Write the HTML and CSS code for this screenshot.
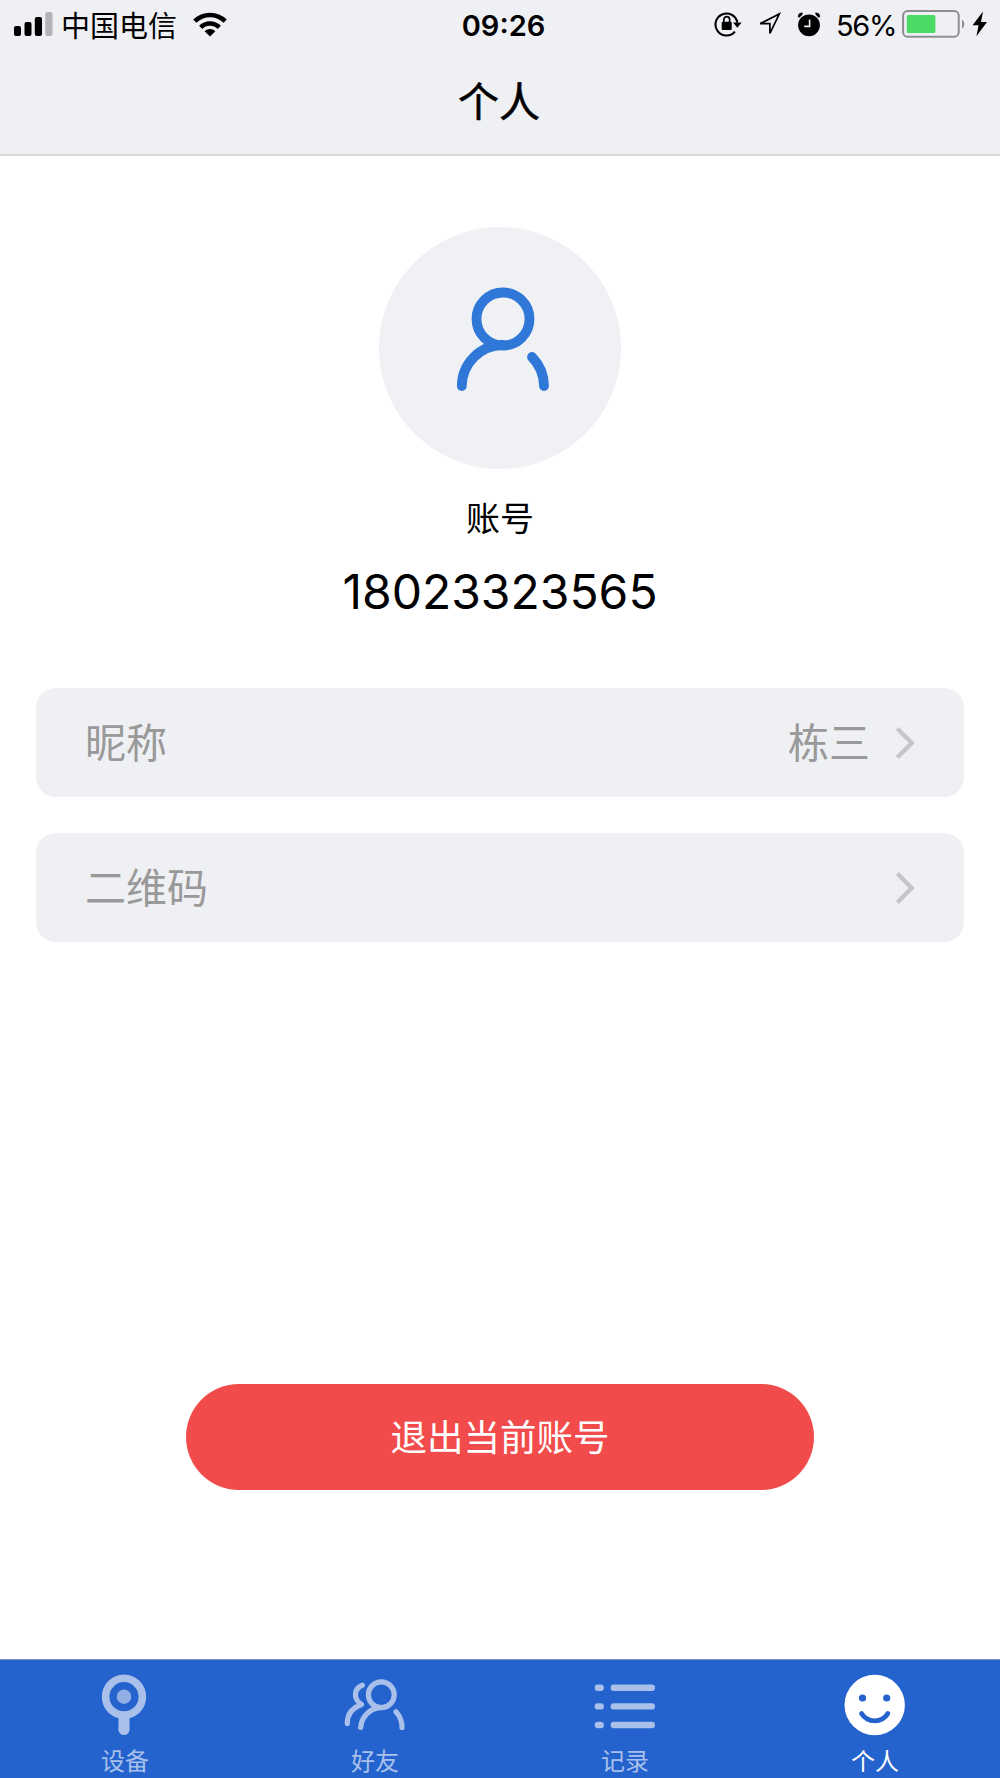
FILE: index.html
```
<!DOCTYPE html>
<html lang="zh-CN">
<head>
    <meta charset="UTF-8">
    <meta name="viewport" content="width=device-width, initial-scale=1.0">
    <title>个人</title>
    <link rel="stylesheet" href="styles.css">
</head>
<body>
    <div class="header">
        <div class="status">
            <div class="status-left">
                <svg class="signal" width="39" height="24" viewBox="0 0 39 24">
                    <rect x="0" y="14" width="7" height="10" rx="2"/>
                    <rect x="10.5" y="10" width="7" height="14" rx="2"/>
                    <rect x="20.8" y="5" width="7.2" height="19" rx="2"/>
                    <rect x="31.3" y="0" width="7.2" height="24" rx="2" fill="#b3b4b7"/>
                </svg>
                <span class="carrier">中国电信</span>
                <svg class="wifi" width="34" height="25" viewBox="0 0 34 25">
                    <g fill="none" stroke="#000" stroke-width="4.6">
                        <path d="M1.8 9.2a21.6 21.6 0 0 1 30.4 0"/>
                        <path d="M7.7 15.3a13.2 13.2 0 0 1 18.6 0"/>
                    </g>
                    <path d="M11.6 19.2a7.7 7.7 0 0 1 10.8 0L17 24.6z"/>
                </svg>
            </div>
            <div class="time">09:26</div>
            <div class="status-right">
                <svg class="rotate" width="28" height="26" viewBox="0 0 28 26">
                    <path d="M20.9 20.6A11 11 0 1 1 23.3 11.5" fill="none" stroke="#000" stroke-width="2.1"/>
                    <path d="M19 11.5h8.6l-4.3 5.3z"/>
                    <rect x="7.7" y="10.8" width="10" height="8.2" rx="1"/>
                    <path d="M9.8 11.5V8.6a2.9 2.9 0 0 1 5.8 0v2.9" fill="none" stroke="#000" stroke-width="1.7"/>
                </svg>
                <svg class="arrow" width="25" height="25" viewBox="0 0 25 25">
                    <path d="M3.2 11.6L22.3 2 12.9 21.3V11.6z" fill="none" stroke="#000" stroke-width="1.7"/>
                </svg>
                <svg class="alarm" width="24" height="25" viewBox="0 0 24 25">
                    <circle cx="12" cy="13.3" r="10.9"/>
                    <path d="M1.2 4.6A4 4 0 0 1 5.2.9L5 2.6 2.2 5.2zM22.8 4.6A4 4 0 0 0 18.800.9L19 2.600 21.800 5.200z" stroke="#000" stroke-width="1"/>
                    <path d="M12.600 7.400v7H7.200" fill="none" stroke="#eff0f4" stroke-width="1.600"/>
                </svg>
                <span class="percent">56%</span>
                <svg class="battery" width="64" height="28" viewBox="0 0 64 28">
                    <rect x="1.1" y="1.1" width="55.6" height="25.6" rx="4.5" fill="none" stroke="#8d8e91" stroke-width="2"/>
                    <rect x="4.8" y="5" width="28.6" height="18" rx="1.5" fill="#4cd964"/>
                    <path d="M60 9.5a5.5 5.5 0 0 1 0 9z" fill="#8d8e91"/>
                </svg>
                <svg class="bolt" width="16" height="26" viewBox="0 0 16 26">
                    <path d="M11 .5L.6 14.2h6L4.4 25.2 15 11H9z"/>
                </svg>
            </div>
        </div>
        <h1>个人</h1>
    </div>

    <div class="content">
        <div class="avatar">
            <svg width="94" height="106" viewBox="0 0 94 106">
                <g fill="none" stroke="#2f78d7" stroke-width="9.8" stroke-linecap="round">
                    <circle cx="47" cy="32" r="26.5"/>
                    <path d="M5.8 99A41.3 41.3 0 0 1 46.5 58"/>
                    <path d="M76 70Q88 82.5 88 99"/>
                </g>
            </svg>
        </div>
        <div class="label">账号</div>
        <div class="phone">18023323565</div>

        <div class="row">
            <span>昵称</span>
            <span class="value">栋三</span>
            <svg width="20" height="34" viewBox="0 0 20 34"><path d="M2.3 2.5L16.8 17 2.3 31.5"/></svg>
        </div>
        <div class="row">
            <span>二维码</span>
            <span class="value"></span>
            <svg width="20" height="34" viewBox="0 0 20 34"><path d="M2.3 2.5L16.8 17 2.3 31.5"/></svg>
        </div>

        <div class="logout">退出当前账号</div>
    </div>

    <div class="tabs">
        <div class="tab">
            <svg width="62" height="62" viewBox="0 0 62 62">
                <circle cx="30" cy="22.7" r="18.4" fill="none" stroke="#a8c0ea" stroke-width="7.6"/>
                <circle cx="30" cy="22.7" r="7.2" fill="#91afe5"/>
                <path d="M30 44v11.7" fill="none" stroke="#a8c0ea" stroke-width="11"/>
                <circle cx="30" cy="55.5" r="5.5" fill="#a8c0ea"/>
            </svg>
            <span>设备</span>
        </div>
        <div class="tab">
            <svg width="62" height="62" viewBox="0 0 62 62">
                <g fill="none" stroke="#a8c0ea" stroke-width="5.2" stroke-linecap="round" stroke-linejoin="round">
                    <circle cx="37.3" cy="20.8" r="12.9"/>
                    <path d="M16.7 53.5A21 21 0 0 1 36.5 33.7"/>
                    <path d="M52 37.8Q58 44.5 58 53.5"/>
                    <path d="M18.4 11.2C10.5 14 8.2 24.5 17.5 30.500Q17 31 14 32.200C7 35.500 3.300 41 3.300 49.500"/>
                </g>
            </svg>
            <span>好友</span>
        </div>
        <div class="tab">
            <svg width="62" height="62" viewBox="0 0 62 62">
                <g fill="none" stroke="#a8c0ea" stroke-width="6.4" stroke-linecap="round">
                    <path d="M3.9 13.700h2.800M19.800 13.700h38M3.900 32.400h2.800M19.800 32.400h38M3.900 51h2.800M19.800 51h38"/>
                </g>
            </svg>
            <span>记录</span>
        </div>
        <div class="tab active">
            <svg width="62" height="62" viewBox="0 0 62 62">
                <circle cx="30.7" cy="31" r="30.2" fill="#fff"/>
                <circle cx="18.5" cy="24" r="3.6" fill="#2463cd"/>
                <circle cx="42.7" cy="24" r="3.6" fill="#2463cd"/>
                <path d="M17.500 39.500Q22 46.800 30.700 46.800T43.900 39.500" fill="none" stroke="#2463cd" stroke-width="4.800" stroke-linecap="round"/>
            </svg>
            <span>个人</span>
        </div>
    </div>
</body>
</html>
```
FILE: styles.css
```
*{
    box-sizing: border-box;
}
body{
    margin: 0;
    height: 1778px;
    display: flex;
    flex-direction: column;
    background-color: #fff;
    color: #000;
    font-family: Inter, "Noto Sans CJK SC", sans-serif;
}
svg{
    display: block;
    flex: none;
}
.header{
    height: 156px;
    background-color: #eff0f4;
    border-bottom: 2px solid #d8d9dc;
}
.status{
    height: 50px;
    padding: 0 12px 0 14px;
    display: grid;
    grid-template-columns: 1fr auto 1fr;
    align-items: center;
    font-size: 29px;
    line-height: 50px;
}
.status-left, .status-right{
    display: flex;
    align-items: center;
}
.status-right{
    justify-content: flex-end;
}
.signal{
    margin-right: 8px;
    margin-top: -2px;
}
.carrier{
    padding-top: 3px;
    line-height: 47px;
}
.wifi{
    margin-left: 16px;
    margin-top: -2px;
}
.time{
    padding: 1px 0 0 5px;
    line-height: 49px;
    font-weight: 600;
}
.rotate{
    margin-right: 15px;
}
.arrow{
    margin-right: 15px;
}
.alarm{
    margin-right: 15px;
}
.percent{
    padding-top: 2px;
    margin-right: 6px;
    line-height: 48px;
    letter-spacing: -1.4px;
}
.battery{
    margin-right: 6px;
}
.rotate, .arrow, .alarm, .battery, .bolt{
    margin-top: -2px;
}
h1{
    margin: 22px 2px 0 0;
    font-size: 41px;
    font-weight: 400;
    line-height: 60px;
    text-align: center;
    -webkit-text-stroke: 0.6px #000;
}
.content{
    flex: 1;
    padding: 71px 36px 0;
    display: flex;
    flex-direction: column;
    align-items: center;
}
.avatar{
    width: 242px;
    height: 242px;
    padding: 60px 0 0 5px;
    margin-bottom: 25px;
    display: flex;
    justify-content: center;
    border-radius: 50%;
    background-color: #eff1f4;
}
.label{
    font-size: 34px;
    line-height: 50px;
}
.phone{
    margin: 18px 0 66px;
    font-size: 48px;
    line-height: 60px;
}
.row{
    width: 100%;
    height: 109px;
    margin-bottom: 36px;
    padding: 0 49px;
    display: flex;
    align-items: center;
    border-radius: 20px;
    background-color: #eff0f4;
    color: #999;
    font-size: 41px;
    line-height: 60px;
}
.row .value{
    margin-left: auto;
    margin-right: 25px;
}
.row path{
    fill: none;
    stroke: #c5c6ca;
    stroke-width: 4.4;
}
.logout{
    width: 628px;
    height: 106px;
    margin-top: 406px;
    padding-top: 2px;
    border-radius: 53px;
    background-color: #f24b4b;
    color: #fff;
    font-size: 36.5px;
    line-height: 104px;
    text-align: center;
}
.tabs{
    height: 119px;
    display: flex;
    background-color: #2463cd;
    border-top: 1px solid #7a93c0;
}
.tab{
    flex: 1;
    padding-top: 14px;
    display: flex;
    flex-direction: column;
    align-items: center;
    color: #a8c0ea;
    font-size: 24px;
    line-height: 36px;
}
.tab span{
    margin-top: 8px;
}
.tab.active{
    color: #fff;
}
```
